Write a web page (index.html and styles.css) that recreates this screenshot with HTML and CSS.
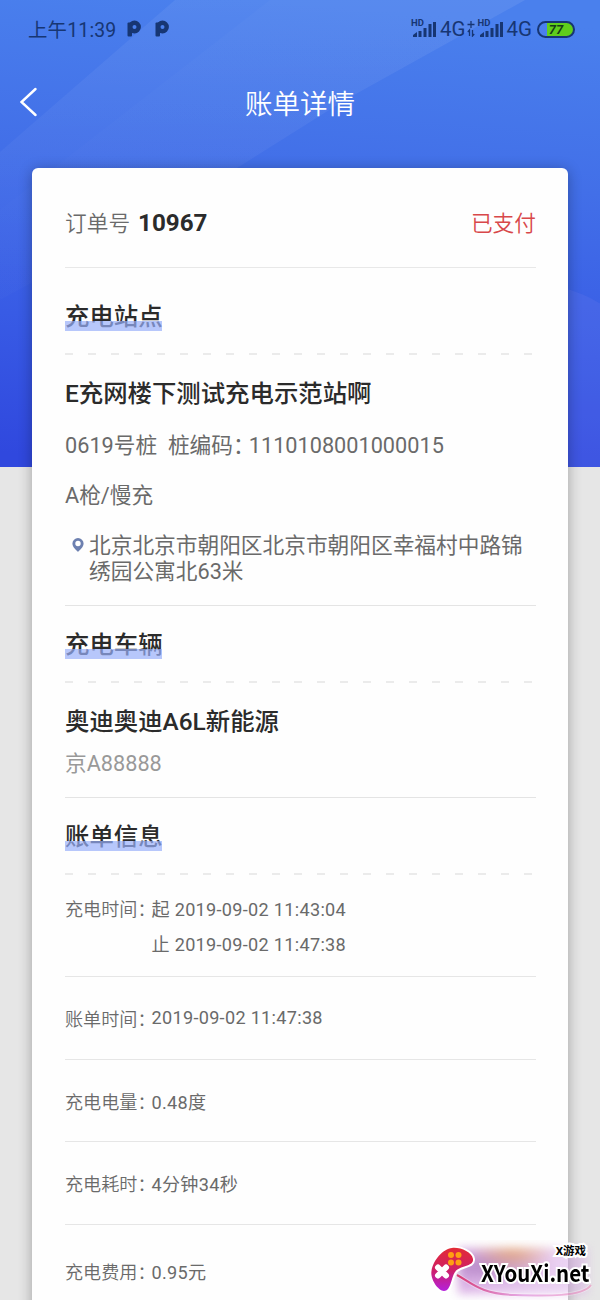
FILE: index.html
```html
<!DOCTYPE html>
<html lang="zh-CN">
  <head>
    <meta charset="UTF-8" />
    <meta name="viewport" content="width=device-width, initial-scale=1.0" />
    <title>账单详情</title>
    <link rel="stylesheet" href="styles.css">
  </head>
  <body>
    <svg class="backdrop" width="600" height="467" viewBox="0 0 600 467" preserveAspectRatio="none">
      <defs>
        <linearGradient id="sky" x1="0.4" y1="0" x2="0.3" y2="1">
          <stop offset="0" stop-color="#4a80ed" />
          <stop offset="0.35" stop-color="#426fe8" />
          <stop offset="0.7" stop-color="#385be5" />
          <stop offset="1" stop-color="#3048de" />
        </linearGradient>
        <linearGradient id="beam" x1="0" y1="0" x2="0" y2="1">
          <stop offset="0" stop-color="#fff" stop-opacity="0.06" />
          <stop offset="1" stop-color="#fff" stop-opacity="0.01" />
        </linearGradient>
      </defs>
      <rect width="600" height="467" fill="url(#sky)" />
      <polygon points="175,0 525,0 345,100 207,187 0,300 0,152" fill="url(#beam)" />
      <polygon points="270,0 525,0 345,100 207,187 0,300 0,210" fill="url(#beam)" opacity="0.3" />
      <circle cx="530" cy="420" r="136" fill="#7d83ee" opacity="0.17" />
    </svg>

    <div class="status-bar">
      <div class="status-left">
        <span>上午11:39</span>
        <svg class="app-icon" width="14" height="18" viewBox="0 0 14 18">
          <rect x="0.500" y="2.500" width="4.500" height="14" rx="1" />
          <circle cx="7.500" cy="7" r="4.200" />
        </svg>
        <svg class="app-icon" width="14" height="18" viewBox="0 0 14 18">
          <rect x="0.500" y="2.500" width="4.500" height="14" rx="1" />
          <circle cx="7.500" cy="7" r="4.200" />
        </svg>
      </div>
      <div class="status-right">
        <div class="signal">
          <span>HD</span>
          <svg width="24" height="18" viewBox="0 0 24 18">
            <path d="M1 17v-2l4-3v5zM6.500 17v-6h3v6zM11.500 17V8h3v9zM16.500 17V4h3v13zM21 17V2h3v15z" />
          </svg>
        </div>
        <span class="network">4G</span>
        <svg class="data" width="8" height="16" viewBox="0 0 8 16">
          <path d="M4 0v7M.5 3.500h7M2.500 15V9L.8 11M5.500 9v6l1.700-2" />
        </svg>
        <div class="signal">
          <span>HD</span>
          <svg width="24" height="18" viewBox="0 0 24 18">
            <path d="M1 17v-2l4-3v5zM6.500 17v-6h3v6zM11.500 17V8h3v9zM16.500 17V4h3v13zM21 17V2h3v15z" />
          </svg>
        </div>
        <span class="network">4G</span>
        <div class="battery"><span>77</span></div>
      </div>
    </div>

    <div class="nav-bar">
      <svg class="back" width="18" height="30" viewBox="0 0 18 30">
        <path d="M15.500 2L1.500 15l14 13" />
      </svg>
      <h1>账单详情</h1>
    </div>

    <div class="card">
      <div class="order">
        <div><span>订单号</span><b>10967</b></div>
        <span class="paid">已支付</span>
      </div>

      <div class="section station">
        <h2>充电站点</h2>
        <div class="dashes"></div>
        <h3>E充网楼下测试充电示范站啊</h3>
        <p class="pile">0619号桩&nbsp; 桩编码<span class="colon">：</span>1110108001000015</p>
        <p class="gun">A枪/慢充</p>
        <div class="address">
          <svg width="12" height="14" viewBox="0 0 12 14">
            <path fill-rule="evenodd" d="M6 0a5.600 5.600 0 0 0-5.600 5.600C.4 9 4 12 6 14c2-2 5.600-5 5.600-8.400A5.600 5.600 0 0 0 6 0zm0 2.800a2.700 2.700 0 1 1 0 5.400 2.700 2.700 0 0 1 0-5.400z" />
          </svg>
          <p>北京北京市朝阳区北京市朝阳区幸福村中路锦绣园公寓北63米</p>
        </div>
      </div>

      <div class="section car">
        <h2>充电车辆</h2>
        <div class="dashes"></div>
        <h3>奥迪奥迪A6L新能源</h3>
        <p class="plate">京A88888</p>
      </div>

      <div class="section bill">
        <h2>账单信息</h2>
        <div class="dashes"></div>
        <div class="row times">
          <span class="label">充电时间：</span>
          <div class="value">
            <p>起 2019-09-02 11:43:04</p>
            <p>止 2019-09-02 11:47:38</p>
          </div>
        </div>
        <div class="row"><span class="label">账单时间：</span><span class="value">2019-09-02 11:47:38</span></div>
        <div class="row"><span class="label">充电电量：</span><span class="value">0.48度</span></div>
        <div class="row"><span class="label">充电耗时：</span><span class="value">4分钟34秒</span></div>
        <div class="row cost"><span class="label">充电费用：</span><span class="value">0.95元</span></div>
      </div>
    </div>

    <div class="watermark">
      <div class="glow"></div>
      <svg width="170" height="60" viewBox="0 0 170 60">
        <defs>
          <linearGradient id="pad" x1="0" y1="0" x2="0" y2="1">
            <stop offset="0" stop-color="#e32b35" />
            <stop offset="0.5" stop-color="#cf2065" />
            <stop offset="1" stop-color="#b421dc" />
          </linearGradient>
          <linearGradient id="cord" x1="0" y1="0" x2="1" y2="0">
            <stop offset="0" stop-color="#d9386f" />
            <stop offset="0.5" stop-color="#d56bd0" stop-opacity="0.5" />
            <stop offset="1" stop-color="#e55a9a" stop-opacity="0.4" />
          </linearGradient>
        </defs>
        <path d="M27 29C42 37 50 48 85 49C115 50 153 51 161 39" fill="none" stroke="#fff" stroke-width="4" opacity="0.3" />
        <path d="M27 29C42 37 50 48 85 49C115 50 153 51 161 39" fill="none" stroke="url(#cord)" stroke-width="2" />
        <path d="M1.500 25C3 14 13 3 22 2c8-1 20 4 21 11 1 8-13 6-18 13-4 6-4 19-11 19C8 45 0 33 1.500 25z" fill="url(#pad)" stroke="#fff" stroke-width="4" paint-order="stroke" />
        <g fill="#ff9f12">
          <circle cx="21" cy="9" r="3" /><circle cx="28.500" cy="9" r="3" />
          <circle cx="21" cy="16.500" r="3" /><circle cx="28.500" cy="16.500" r="3" />
        </g>
        <path d="M8 21.500l8 8M16 21.500l-8 8" stroke="#fff" stroke-width="6" stroke-linecap="round" />
      </svg>
      <span class="site-name">X游戏</span>
      <span class="site-url">XYouXi.net</span>
    </div>
  </body>
</html>
```
FILE: styles.css
```css
* {
  box-sizing: border-box;
}

body {
  position: relative;
  height: 1300px;
  margin: 0;
  overflow: hidden;
  background: #e6e6e6;
  color: #6a6a6a;
  font-family: Roboto, "Noto Sans CJK SC", sans-serif;
  font-size: 21.7px;
}

h1,
h2,
h3,
p {
  margin: 0;
}

.backdrop {
  position: absolute;
  top: 0;
  left: 0;
  z-index: -1;
}

/* status bar */
.status-bar {
  display: flex;
  justify-content: space-between;
  align-items: center;
  height: 58px;
  padding: 0 25px 0 28px;
  color: #173673;
  font-size: 20px;
}

.status-left,
.status-right {
  display: flex;
  align-items: center;
}

.status-left {
  margin-top: -2px;
  font-size: 19.4px;
  letter-spacing: 0.2px;
}

.app-icon {
  margin: 1px 0 0 11px;
  fill: #173673;
}

.app-icon circle {
  fill: #4a81ef;
  stroke: #173673;
  stroke-width: 4.4;
}

.app-icon + .app-icon {
  margin-left: 14px;
}

.signal {
  position: relative;
  height: 18px;
}

.signal svg {
  display: block;
  fill: #173673;
}

.signal span {
  position: absolute;
  top: -2px;
  left: -1px;
  font-size: 9.5px;
  font-weight: 700;
  line-height: 9px;
}

.network {
  margin-left: 4px;
  font-size: 20.5px;
}

.data {
  margin: 0 4px 0 1px;
  fill: none;
  stroke: #173673;
  stroke-width: 1.3;
}

.battery {
  width: 38px;
  height: 17px;
  margin-left: 5px;
  border: 2px solid #173673;
  border-radius: 9px;
  background: linear-gradient(to right, transparent 8px, #5fce1c 8px);
  color: #163d18;
  font-size: 13px;
  font-style: italic;
  font-weight: 700;
  line-height: 13px;
  text-align: center;
}

/* title bar */
.nav-bar {
  display: flex;
  align-items: center;
  height: 90px;
  padding: 0 20px;
  color: #fff;
}

.nav-bar h1 {
  flex: 1;
  margin: -2px 18px 0 0;
  font-size: 27.5px;
  font-weight: 350;
  text-align: center;
}

.back {
  margin-top: -3px;
  fill: none;
  stroke: #fff;
  stroke-width: 2.4;
  stroke-linecap: round;
}

/* bill card */
.card {
  height: 1160px;
  margin: 20px 32px 0;
  padding: 0 32px 0 33px;
  border-radius: 6px;
  background: #fefefe;
  box-shadow: 0 2px 14px rgba(0, 0, 0, 0.3);
}

.order {
  display: flex;
  justify-content: space-between;
  align-items: center;
  height: 100px;
  padding-top: 8px;
  border-bottom: 1px solid #e8e8e8;
  font-weight: 350;
}

.order b {
  margin-left: 8px;
  color: #2b2b2b;
  font-size: 24.2px;
  font-weight: 700;
}

.order .paid {
  color: #d8484a;
}

.section {
  border-bottom: 1px solid #e4e4e4;
}

.section h2 {
  position: relative;
  width: 97px;
  height: 30px;
  color: #2b2b2b;
  font-size: 24.4px;
  font-weight: 500;
  line-height: 32px;
  white-space: nowrap;
}

/* highlight strip over the foot of the heading */
.section h2::after {
  content: "";
  position: absolute;
  right: 0;
  bottom: 0;
  left: 0;
  height: 10px;
  background: rgba(152, 175, 249, 0.7);
}

.section h3 {
  color: #2b2b2b;
  font-size: 24.4px;
  font-weight: 500;
  line-height: 32px;
}

.dashes {
  height: 2px;
  margin-top: 22px;
  background: repeating-linear-gradient(to right, #ebebeb 0 8px, transparent 8px 22.95px);
}

.station {
  height: 338px;
  padding-top: 33px;
}

.station h3 {
  margin-top: 23px;
}

.pile,
.gun,
.plate {
  line-height: 30px;
}

.pile {
  margin-top: 21px;
}

.gun {
  margin-top: 20px;
}

.colon {
  letter-spacing: -0.27em;
}

.address {
  display: flex;
  margin-top: 22px;
}

.address svg {
  flex: none;
  margin: 5px 5px 0 7px;
  fill: #6d80b0;
}

.address p {
  line-height: 26px;
}

.car {
  height: 192px;
  padding-top: 23px;
}

.car h3 {
  margin-top: 23px;
}

.plate {
  margin-top: 11px;
  color: #999;
}

.bill {
  padding-top: 23px;
  border-bottom: none;
}

.row {
  display: flex;
  align-items: center;
  height: 82.7px;
  border-bottom: 1px solid #e6e6e6;
  font-size: 18.1px;
}

.times {
  align-items: flex-start;
  height: 102px;
  padding-top: 18px;
  line-height: 34.6px;
}

.cost {
  height: 92px;
  border-bottom: none;
}

.label {
  width: 86.5px;
  font-weight: 350;
  white-space: nowrap;
}

.value {
  letter-spacing: 0.3px;
}

/* watermark */
.watermark {
  position: absolute;
  top: 1240px;
  left: 430px;
  width: 170px;
  height: 60px;
  overflow: hidden;
  color: #000;
}

.watermark svg {
  position: absolute;
  top: 6px;
  left: 0;
}

.glow {
  position: absolute;
  top: 8px;
  left: 28px;
  width: 130px;
  height: 46px;
  background:
    radial-gradient(ellipse at 42% 0, rgba(232, 160, 80, 0.7), transparent 40%),
    radial-gradient(ellipse at 20% 40%, rgba(120, 60, 150, 0.4), transparent 50%),
    linear-gradient(to right, rgba(198, 130, 215, 0.6), rgba(210, 150, 230, 0.35));
  filter: blur(5px);
}

.site-name,
.site-url {
  position: absolute;
  font-weight: 700;
  white-space: nowrap;
  -webkit-text-stroke: 4px #fff;
  paint-order: stroke fill;
}

.site-name {
  top: 4px;
  right: 14px;
  font-size: 11.5px;
  line-height: 14px;
}

.site-url {
  top: 20px;
  left: 51px;
  font-family: "Noto Sans CJK SC", sans-serif;
  font-size: 23px;
  line-height: 24px;
  transform: scaleX(0.89);
  transform-origin: left;
}
```
